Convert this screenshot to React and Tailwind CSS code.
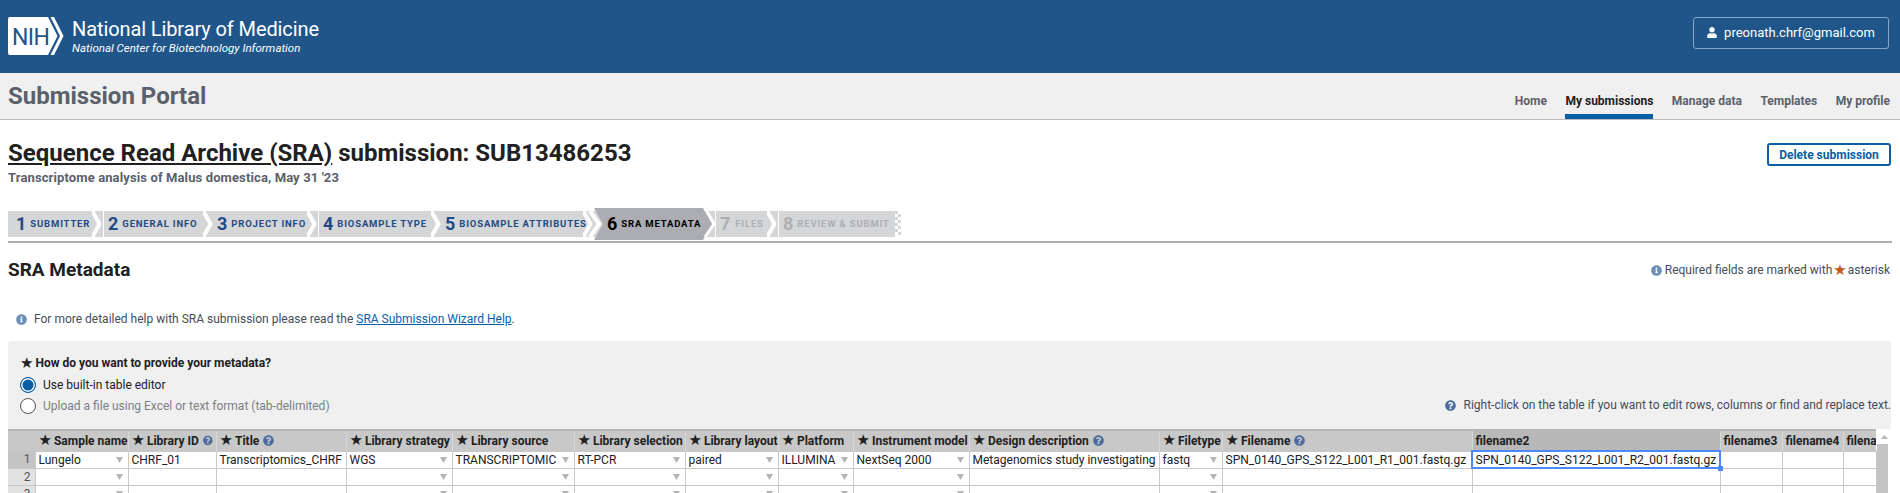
import React from 'react';
import { FaUser, FaInfoCircle, FaQuestionCircle } from 'react-icons/fa';

const steps = [
  { n: 1, label: 'Submitter', w: 'w-[96px]', pl: 'pl-[8px]', line: true },
  { n: 2, label: 'General info', w: 'w-[110px]', pl: 'pl-[4px]' },
  { n: 3, label: 'Project info', w: 'w-[105px]', pl: 'pl-[3px]', line: true },
  { n: 4, label: 'Biosample type', w: 'w-[123px]', pl: 'pl-[4px]' },
  { n: 5, label: 'Biosample attributes', w: 'w-[152px]', pl: 'pl-[3px]' },
];

const columns = [
  { name: 'Sample name', w: 'w-[93px]', req: true, value: 'Lungelo', arrow: true },
  { name: 'Library ID', w: 'w-[88px]', req: true, help: true, value: 'CHRF_01' },
  { name: 'Title', w: 'w-[130px]', req: true, help: true, value: 'Transcriptomics_CHRF' },
  { name: 'Library strategy', w: 'w-[106px]', req: true, value: 'WGS', arrow: true },
  { name: 'Library source', w: 'w-[122px]', req: true, value: 'TRANSCRIPTOMIC', arrow: true },
  { name: 'Library selection', w: 'w-[111px]', req: true, value: 'RT-PCR', arrow: true },
  { name: 'Library layout', w: 'w-[93px]', req: true, value: 'paired', arrow: true },
  { name: 'Platform', w: 'w-[75px]', req: true, value: 'ILLUMINA', arrow: true },
  { name: 'Instrument model', w: 'w-[116px]', req: true, value: 'NextSeq 2000', arrow: true },
  { name: 'Design description', w: 'w-[190px]', req: true, help: true, value: 'Metagenomics study investigating' },
  { name: 'Filetype', w: 'w-[63px]', req: true, value: 'fastq', arrow: true },
  { name: 'Filename', w: 'w-[250px]', req: true, help: true, value: 'SPN_0140_GPS_S122_L001_R1_001.fastq.gz' },
  { name: 'filename2', w: 'w-[248px]', value: 'SPN_0140_GPS_S122_L001_R2_001.fastq.gz', selected: true },
  { name: 'filename3', w: 'w-[62px]', value: '' },
  { name: 'filename4', w: 'w-[61px]', value: '' },
  { name: 'filename5', w: 'w-[33px]', value: '' },
];

const Star = () => (
  <span className="font-['DejaVu_Sans',sans-serif] text-[15px] leading-none font-normal text-[#222] mr-[2px]">★</span>
);

const Arrow = () => (
  <svg className="w-[7px] h-[7px] shrink-0 ml-auto mr-[2px]" viewBox="0 0 8 8">
    <path d="M0 1h8L4 8z" fill="#b4b4b4" />
  </svg>
);

const Chevron = () => (
  <svg className="absolute right-0 top-0 h-[26px] w-[11px]" viewBox="0 0 11 26">
    <path d="M-1 -2L7.5 13L-1 28" fill="none" stroke="#fff" strokeWidth="4" />
  </svg>
);

const Nav = ({ children, active }) => (
  <a className={`h-[46px] flex items-center pt-[15px] border-b-[5px] text-[12px] font-bold ${active ? 'border-[#0a5ea6] text-[#212121]' : 'border-transparent text-[#5b616b]'}`}>
    {children}
  </a>
);

export default function App() {
  return (
    <div className="w-[1900px] h-[493px] overflow-hidden bg-white font-['Roboto',sans-serif] text-[#212121]">
      {/* top bar */}
      <header className="h-[73px] bg-[#20558a] flex items-center justify-between pl-[8px] pr-[11px]">
        <div className="flex items-center">
          <svg className="w-[56px] h-[38px] -mt-[1px]" viewBox="0 0 56 38">
            <path d="M2 0H40L49.5 19L40 38H2A2 2 0 0 1 0 36V2A2 2 0 0 1 2 0Z" fill="#fff" />
            <path d="M42.5 0H46L55.5 19L46 38H42.5L52 19Z" fill="#fff" />
            <text x="4" y="28" fontFamily="Roboto, sans-serif" fontSize="23" letterSpacing="-0.6" fill="#20558a">NIH</text>
          </svg>
          <div className="ml-[8px] text-white">
            <div className="text-[20px] leading-[22px] tracking-[-0.1px]">National Library of Medicine</div>
            <div className="text-[11.5px] leading-[14px] italic mt-[1px]">National Center for Biotechnology Information</div>
          </div>
        </div>
        <button className="w-[196px] h-[32px] -mt-[8px] flex items-center justify-center gap-[7px] border border-[#8ba6c3] rounded-[3px] text-white text-[13px]">
          <FaUser className="w-[10px] h-[11px]" />
          preonath.chrf@gmail.com
        </button>
      </header>

      {/* portal nav */}
      <div className="h-[47px] bg-[#f0f0f0] border-b border-[#bdbdbd] flex justify-between pl-[8px] pr-[10px]">
        <div className="text-[24px] leading-[46px] font-bold text-[#5b616b]">Submission Portal</div>
        <nav className="flex gap-[18.5px]">
          <Nav>Home</Nav>
          <Nav active>My submissions</Nav>
          <Nav>Manage data</Nav>
          <Nav>Templates</Nav>
          <Nav>My profile</Nav>
        </nav>
      </div>

      {/* title */}
      <div className="flex justify-between items-start px-[8px] pr-[9px] pt-[18px] h-[91px]">
        <div>
          <h1 className="text-[24px] leading-[30px] font-bold">
            <a className="underline">Sequence Read Archive (SRA)</a> submission: SUB13486253
          </h1>
          <p className="text-[13px] leading-[16px] font-bold text-[#5b616b] mt-[2px] tracking-[0.12px]">Transcriptome analysis of Malus domestica, May 31 '23</p>
        </div>
        <button className="w-[124px] h-[23px] mt-[5px] border-2 border-[#0a5ea6] rounded-[3px] text-[#0a5ea6] text-[12px] font-bold leading-none">
          Delete submission
        </button>
      </div>

      {/* steps */}
      <div className="mx-[8px] h-[32px] border-b-2 border-[#acadb2]">
        <div className="flex h-[26px] w-fit items-stretch">
          {steps.map((s) => (
            <div key={s.n} className={`relative ${s.w} ${s.pl} bg-[#d5d6d8] flex items-center shrink-0 ${s.line ? 'border-r border-white' : ''}`}>
              <span className="text-[18px] font-bold text-[#1f4a85] leading-none mr-[4px]">{s.n}</span>
              <span className="text-[9.5px] font-bold uppercase tracking-[0.83px] text-[#1f4a85] whitespace-nowrap">{s.label}</span>
              <Chevron />
            </div>
          ))}
          <div className="relative w-[121px] shrink-0 bg-[#d5d6d8]">
            <svg className="absolute left-0 -top-[3px] w-[121px] h-[32px] overflow-visible" viewBox="0 0 121 32">
              <path d="M0 0H109L118 16L109 32H0L9 16Z" fill="#acadb2" />
              <path d="M-4 3L5 16L-4 29" fill="none" stroke="#fff" strokeWidth="4" />
              <path d="M111 0L120 16L111 29" fill="none" stroke="#fff" strokeWidth="3" />
            </svg>
            <div className="relative h-full flex items-center pl-[13px]">
              <span className="text-[18px] font-bold text-black leading-none mr-[4px]">6</span>
              <span className="text-[9.5px] font-bold uppercase tracking-[0.83px] text-black whitespace-nowrap">SRA Metadata</span>
            </div>
          </div>
          <div className="relative w-[63px] shrink-0 bg-[#d5d6d8] border-l border-white flex items-center pl-[4px]">
            <span className="text-[18px] font-bold text-[#aeafb3] leading-none mr-[5px]">7</span>
            <span className="text-[9.5px] font-bold uppercase tracking-[0.83px] text-[#aeafb3]">Files</span>
            <Chevron />
          </div>
          <div className="relative w-[117px] shrink-0 bg-[#d5d6d8] border-l border-white flex items-center pl-[4px]">
            <span className="text-[18px] font-bold text-[#aeafb3] leading-none mr-[4px]">8</span>
            <span className="text-[9.5px] font-bold uppercase tracking-[0.83px] text-[#aeafb3] whitespace-nowrap">Review &amp; submit</span>
          </div>
          <svg className="w-[6px] h-[26px]" viewBox="0 0 6 26">
            <path d="M0 0h3v3H0zM3 3h3v3H3zM0 6h3v3H0zM3 9h3v3H3zM0 12h3v3H0zM3 15h3v3H3zM0 18h3v3H0zM3 21h3v3H3z" fill="#d5d6d8" />
          </svg>
        </div>
      </div>

      {/* section heading */}
      <div className="flex justify-between items-center pl-[8px] pr-[10px] h-[54px]">
        <h2 className="text-[19px] font-bold">SRA Metadata</h2>
        <div className="flex items-center text-[12px] text-[#454d5a]">
          <FaInfoCircle className="w-[11px] h-[11px] text-[#6b8fb8] mr-[3px]" />
          Required fields are marked with
          <span className="font-['DejaVu_Sans',sans-serif] text-[15px] leading-none text-[#c2571a] mx-[1px]">★</span>
          asterisk
        </div>
      </div>

      <div className="flex items-center pl-[16px] h-[44px] text-[12px] text-[#454d5a]">
        <FaInfoCircle className="w-[11px] h-[11px] text-[#6b8fb8] mr-[7px]" />
        <span>
          For more detailed help with SRA submission please read the{' '}
          <a className="text-[#0a5ea6] underline">SRA Submission Wizard Help</a>.
        </span>
      </div>

      {/* metadata panel */}
      <div className="mx-[9px] ml-[8px] bg-[#f0f0f0] rounded-t-[4px]">
        <div className="h-[88px] px-[12px] pt-[14px] relative">
          <div className="flex items-center text-[12px] leading-[16px] font-bold">
            <Star />
            How do you want to provide your metadata?
          </div>
          <label className="flex items-center h-[21px] mt-[3px] text-[12px]">
            <span className="w-[16px] h-[16px] rounded-full border border-[#0a5ea6] bg-[#0a5ea6] shadow-[inset_0_0_0_1.5px_#fff] mr-[7px]" />
            Use built-in table editor
          </label>
          <label className="flex items-center h-[21px] text-[12px] text-[#7c7f85]">
            <span className="w-[16px] h-[16px] rounded-full border border-[#555] bg-white mr-[7px]" />
            Upload a file using Excel or text format (tab-delimited)
          </label>
          <div className="absolute right-0 top-[55px] flex items-center text-[12px] text-[#454d5a]">
            <FaQuestionCircle className="w-[11px] h-[11px] text-[#4b6c9e] mr-[8px]" />
            Right-click on the table if you want to edit rows, columns or find and replace text.
          </div>
        </div>

        <div className="flex items-start bg-white">
          <table className="table-fixed border-collapse w-[1868px] text-[12px]">
            <colgroup>
              <col className="w-[27px]" />
              {columns.map((c) => (
                <col key={c.name} className={c.w} />
              ))}
            </colgroup>
            <thead>
              <tr className="h-[21px] bg-[#c8c8c8] border-t-2 border-[#b5b5b5]">
                <th className="border-r border-[#c8c8c8]" />
                {columns.map((c) => (
                  <th key={c.name} className={`px-[3px] text-left font-bold whitespace-nowrap overflow-hidden border-l border-[#d8d8d8] ${c.selected ? 'bg-[#b8b8b8]' : ''}`}>
                    <div className="flex items-center">
                      {c.req && <Star />}
                      {c.name}
                      {c.help && <FaQuestionCircle className="w-[11px] h-[11px] ml-[4px] text-[#4b6c9e]" />}
                    </div>
                  </th>
                ))}
              </tr>
            </thead>
            <tbody>
              {[1, 2, 3].map((row) => (
                <tr key={row} className="h-[17px]">
                  <td className={`text-right pr-[4px] text-[#555] leading-none border-b border-[#c8c8c8] ${row === 1 ? 'bg-[#c4c4c4]' : 'bg-[#e2e2e2]'}`}>{row}</td>
                  {columns.map((c) => (
                    <td key={c.name} className={`p-0 border border-[#c8c8c8] whitespace-nowrap ${c.selected && row === 1 ? 'relative outline-2 -outline-offset-1 outline-[#4b89ff]' : 'overflow-hidden'}`}>
                      <div className="flex items-center px-[3px] h-[16px] leading-none overflow-hidden">
                        {row === 1 ? c.value : ''}
                        {c.arrow && <Arrow />}
                      </div>
                      {c.selected && row === 1 && (
                        <span className="absolute -right-[3px] -bottom-[3px] w-[5px] h-[5px] bg-[#4b89ff]" />
                      )}
                    </td>
                  ))}
                </tr>
              ))}
            </tbody>
          </table>
          <div className="w-[15px] shrink-0 pt-[2px]">
            <svg className="w-[13px] h-[13px] mx-auto" viewBox="0 0 13 13">
              <path d="M3 8h7L6.5 4z" fill="#b4b4b4" />
            </svg>
            <div className="w-[11px] h-[60px] bg-[#c4c4c4]" />
          </div>
        </div>
      </div>
    </div>
  );
}
